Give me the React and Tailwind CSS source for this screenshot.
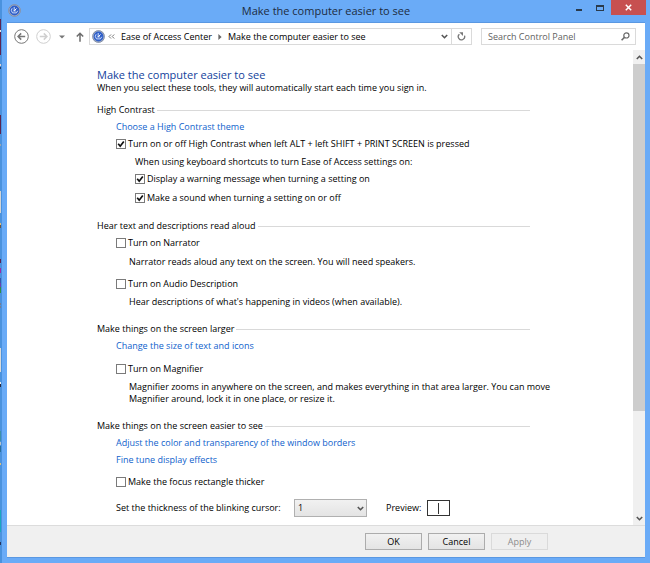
import { useState } from 'react';

function AccessIcon({ className }) {
  return (
    <svg viewBox="0 0 13 13" className={className} aria-hidden="true">
      <circle cx="6.5" cy="6.5" r="6.2" fill="#a9b4c8" />
      <circle cx="6.5" cy="6.5" r="5.9" fill="none" stroke="#76819a" strokeWidth="0.7" />
      <circle cx="6.5" cy="6.5" r="4.9" fill="#2f5fc9" />
      <path d="M6.2 3v3.4M4.1 4.3L3.3 6.5l1.2 2.4h3.9L9.7 6.8" fill="none" stroke="#dfeaff" strokeWidth="0.9" />
      <path d="M6.3 6.7l2.2-2.2M5.4 6.9h2.3" stroke="#fff" strokeWidth="1" />
    </svg>
  );
}

function Chevron({ up = false, className = '' }) {
  return (
    <svg viewBox="0 0 7 5" className={'h-[5px] w-[7px] ' + className} aria-hidden="true">
      <path d={up ? 'M0.8 4L3.5 1.3L6.2 4' : 'M0.8 1L3.5 3.7L6.2 1'} fill="none" stroke="#555" strokeWidth="1.6" />
    </svg>
  );
}

function Check({ label, initial = false, className = '' }) {
  const [on, setOn] = useState(initial);
  return (
    <label className={'flex items-center gap-[2px] ' + className}>
      <span className="grid h-[10px] w-[10px] shrink-0">
        <input
          type="checkbox"
          checked={on}
          onChange={(e) => setOn(e.target.checked)}
          className="col-start-1 row-start-1 h-[10px] w-[10px] appearance-none border border-[#7a7a7a] bg-white"
        />
        {on && (
          <svg viewBox="0 0 10 10" className="pointer-events-none col-start-1 row-start-1 h-[10px] w-[10px]" aria-hidden="true">
            <path d="M2.2 4.8L4.2 7.2L7.8 2.4" fill="none" stroke="#111" strokeWidth="1.7" />
          </svg>
        )}
      </span>
      {label}
    </label>
  );
}

function SectionTitle({ children, className = '' }) {
  return (
    <h2 className={'mr-[103px] flex items-center gap-[2px] ' + className}>
      {children}
      <span className="h-px flex-1 bg-[#d9d9d9]" />
    </h2>
  );
}

function TaskLink({ children, className = '' }) {
  return (
    <a href="#" className={'ml-[19px] block w-fit text-[#0f62cc] ' + className}>
      {children}
    </a>
  );
}

const desktop = [
  [19, 36, '#5c2350'], [30, 2, '#e8e8e8'], [64, 2, '#e5d4d4'], [67, 2, '#203a68'],
  [115, 19, '#59234f'], [144, 2, '#9aa5b1'], [191, 22, '#d2d4d6'], [223, 2, '#e5bf7a'],
  [225, 3, '#665246'], [259, 4, '#562353'], [268, 5, '#9a2aa8'], [278, 5, '#3456ac'],
  [283, 4, '#6a3fae'], [287, 6, '#2f8f45'], [303, 2, '#777c92'], [306, 2, '#777c92'],
  [348, 24, '#d8dadb'], [382, 2, '#eeeeee'], [384, 3, '#27263f'], [431, 10, '#3d90a8'],
  [442, 3, '#b9c3c9'], [446, 6, '#2a6f9b'], [463, 2, '#e0c07a'], [510, 22, '#17a8c0'],
  [542, 3, '#27325c'],
];

export default function App() {
  return (
    <div className="flex min-h-screen bg-[#6aabf7] font-['Open_Sans','Noto_Sans',sans-serif] text-[9px] leading-[12px] text-black">
      <svg className="w-[2px] shrink-0 self-stretch bg-[#4a92de]" aria-hidden="true">
        {desktop.map(([y, h, fill]) => (
          <rect key={y} x="0" y={y} width="1" height={h} fill={fill} />
        ))}
      </svg>
      <div className="flex min-w-0 flex-1 flex-col pr-[5px] pb-[5px] pl-[5px]">
        <header className="grid h-[22px] grid-cols-[1fr_auto_1fr]">
          <AccessIcon className="mt-[4px] ml-[1px] h-[13px] w-[13px]" />
          <h1 className="text-[11px] leading-[22px] text-[#1d2c3e]">Make the computer easier to see</h1>
          <div className="mr-[-1px] flex items-start justify-end">
            <button aria-label="Minimize" className="flex h-[15px] w-[20px] items-center justify-center">
              <span className="mt-[5px] h-[2px] w-[6px] bg-[#2a3a4c]" />
            </button>
            <button aria-label="Maximize" className="flex h-[15px] w-[22px] items-center justify-center">
              <span className="h-[6px] w-[8px] border border-t-2 border-[#2a3a4c]" />
            </button>
            <button aria-label="Close" className="flex h-[15px] w-[35px] items-center justify-center bg-[#c75050]">
              <svg viewBox="0 0 7 7" className="h-[7px] w-[7px]" aria-hidden="true">
                <path d="M0.8 0.8L6.2 6.2M6.2 0.8L0.8 6.2" stroke="#fff" strokeWidth="1.5" />
              </svg>
            </button>
          </div>
        </header>

        <div className="flex flex-1 flex-col border-t border-b border-t-[#5a98e2] border-b-[#5a98e2] bg-white">
          <nav className="flex items-center py-[5px] pr-[9px] pl-[7px]">
            <button aria-label="Back">
              <svg viewBox="0 0 15 15" className="h-[15px] w-[15px]" fill="none" stroke="#777" aria-hidden="true">
                <circle cx="7.5" cy="7.5" r="6.8" strokeWidth="1" />
                <path d="M11.2 7.5H4.4M7.2 4.4L4.1 7.5L7.2 10.6" strokeWidth="1.5" />
              </svg>
            </button>
            <button aria-label="Forward" className="ml-[7px]">
              <svg viewBox="0 0 15 15" className="h-[15px] w-[15px]" fill="none" stroke="#cfcfcf" aria-hidden="true">
                <circle cx="7.5" cy="7.5" r="6.8" strokeWidth="1" />
                <path d="M3.8 7.5H10.6M7.8 4.4L10.9 7.5L7.8 10.6" strokeWidth="1.5" />
              </svg>
            </button>
            <button aria-label="Recent locations" className="ml-[8px]">
              <svg viewBox="0 0 6 4" className="h-[4px] w-[6px]" aria-hidden="true">
                <path d="M0 0.4H6L3 3.6Z" fill="#777" />
              </svg>
            </button>
            <button aria-label="Up" className="ml-[11px]">
              <svg viewBox="0 0 8 10" className="h-[10px] w-[8px]" fill="none" stroke="#6c6c6c" strokeWidth="1.5" aria-hidden="true">
                <path d="M4 9.8V1.4M0.8 4.6L4 1.3L7.2 4.6" />
              </svg>
            </button>
            <div className="ml-[5px] flex h-[17px] min-w-0 flex-1 items-stretch border border-[#dadada]">
              <div className="flex min-w-0 flex-1 items-center pl-[2px]">
                <AccessIcon className="h-[13px] w-[13px] shrink-0" />
                <svg viewBox="0 0 7 5" className="ml-[3px] h-[5px] w-[7px] shrink-0" aria-hidden="true">
                  <path d="M3 0.5L1 2.5L3 4.5M6.2 0.5L4.2 2.5L6.2 4.5" fill="none" stroke="#666" strokeWidth="0.9" />
                </svg>
                <a href="#" className="ml-[6px] whitespace-nowrap">Ease of Access Center</a>
                <svg viewBox="0 0 4 6" className="mx-[6px] h-[6px] w-[4px] shrink-0" aria-hidden="true">
                  <path d="M0.4 0L3.6 3L0.4 6Z" fill="#666" />
                </svg>
                <a href="#" className="whitespace-nowrap">Make the computer easier to see</a>
              </div>
              <button aria-label="Previous locations" className="flex w-[13px] items-center justify-center">
                <Chevron className="shrink-0" />
              </button>
              <button aria-label="Refresh" className="flex w-[20px] items-center justify-center border-l border-[#dadada]">
                <svg viewBox="0 0 9 9" className="h-[9px] w-[9px]" aria-hidden="true">
                  <path d="M2.4 2.2A3.2 3.2 0 1 0 7.5 3.6" fill="none" stroke="#777" strokeWidth="1.3" />
                  <path d="M2.2 0.2H6V4Z" fill="#777" />
                </svg>
              </button>
            </div>
            <label className="ml-[9px] flex h-[17px] w-[155px] items-center border border-[#dadada] pr-[5px] pl-[6px]">
              <input type="text" aria-label="Search Control Panel" placeholder="Search Control Panel" className="min-w-0 flex-1 bg-transparent outline-none placeholder:text-[#5f5f5f]" />
              <svg viewBox="0 0 9 9" className="h-[9px] w-[9px]" fill="none" stroke="#6a6a6a" aria-hidden="true">
                <circle cx="5.4" cy="3.4" r="2.6" strokeWidth="1.2" />
                <path d="M3.5 5.3L0.6 8.2" strokeWidth="1.6" />
              </svg>
            </label>
          </nav>

          <div className="flex flex-1">
            <main className="min-w-0 flex-1 pt-[17px] pb-[7px] pl-[90px]">
              <h2 className="text-[11px] leading-[15px] text-[#12429c]">Make the computer easier to see</h2>
              <p>When you select these tools, they will automatically start each time you sign in.</p>

              <SectionTitle className="mt-[10px]">High Contrast</SectionTitle>
              <TaskLink className="mt-[5px]">Choose a High Contrast theme</TaskLink>
              <Check initial className="mt-[5px] ml-[19px]" label="Turn on or off High Contrast when left ALT + left SHIFT + PRINT SCREEN is pressed" />
              <p className="mt-[6px] ml-[38px]">When using keyboard shortcuts to turn Ease of Access settings on:</p>
              <Check initial className="mt-[5px] ml-[38px]" label="Display a warning message when turning a setting on" />
              <Check initial className="mt-[7px] ml-[38px]" label="Make a sound when turning a setting on or off" />

              <SectionTitle className="mt-[16px]">Hear text and descriptions read aloud</SectionTitle>
              <Check className="mt-[5px] ml-[19px]" label="Turn on Narrator" />
              <p className="mt-[7px] ml-8">Narrator reads aloud any text on the screen. You will need speakers.</p>
              <Check className="mt-[10px] ml-[19px]" label="Turn on Audio Description" />
              <p className="mt-[6px] ml-8">Hear descriptions of what's happening in videos (when available).</p>

              <SectionTitle className="mt-[15px]">Make things on the screen larger</SectionTitle>
              <TaskLink className="mt-[5px]">Change the size of text and icons</TaskLink>
              <Check className="mt-[11px] ml-[19px]" label="Turn on Magnifier" />
              <p className="mt-[6px] mr-[80px] ml-8">
                Magnifier zooms in anywhere on the screen, and makes everything in that area larger. You can move Magnifier around, lock it in one place, or resize it.
              </p>

              <SectionTitle className="mt-[15px]">Make things on the screen easier to see</SectionTitle>
              <TaskLink className="mt-[5px]">Adjust the color and transparency of the window borders</TaskLink>
              <TaskLink className="mt-[5px]">Fine tune display effects</TaskLink>
              <Check className="mt-[10px] ml-[19px]" label="Make the focus rectangle thicker" />
              <div className="mt-[11px] ml-[19px] flex items-center">
                <label htmlFor="thickness" className="w-[178px]">Set the thickness of the blinking cursor:</label>
                <span className="grid w-[73px] items-center">
                  <select id="thickness" className="col-start-1 row-start-1 h-[18px] appearance-none border border-[#b0b0b0] bg-linear-to-b from-[#f1f1f1] to-[#e4e4e4] pl-[3px]">
                    <option>1</option>
                    <option>2</option>
                    <option>3</option>
                  </select>
                  <Chevron className="pointer-events-none col-start-1 row-start-1 mr-[3px] justify-self-end" />
                </span>
                <span className="ml-[19px] w-[41px]">Preview:</span>
                <span className="flex h-4 w-[23px] items-center justify-center border border-[#333]">
                  <span className="h-[11px] w-px bg-[#333]" />
                </span>
              </div>
            </main>
            <div className="flex w-[12px] flex-col bg-[#f0f0f0]">
              <button aria-label="Scroll up" className="flex h-[14px] items-center justify-center"><Chevron up /></button>
              <div className="h-[347px] bg-[#cdcdcd]" />
              <button aria-label="Scroll down" className="mt-auto flex h-[13px] items-center justify-center"><Chevron /></button>
            </div>
          </div>

          <footer className="flex justify-end gap-[6px] border-t border-[#dcdcdc] bg-[#f0f0f0] pt-[7px] pr-[97px] pb-[7px]">
            <button className="h-[17px] w-[57px] border border-[#acacac] bg-linear-to-b from-[#f1f1f1] to-[#e4e4e4]">OK</button>
            <button className="h-[17px] w-[57px] border border-[#acacac] bg-linear-to-b from-[#f1f1f1] to-[#e4e4e4]">Cancel</button>
            <button disabled className="h-[17px] w-[57px] border border-[#dadada] bg-[#efefef] text-[#8c8c8c]">Apply</button>
          </footer>
        </div>
      </div>
    </div>
  );
}
